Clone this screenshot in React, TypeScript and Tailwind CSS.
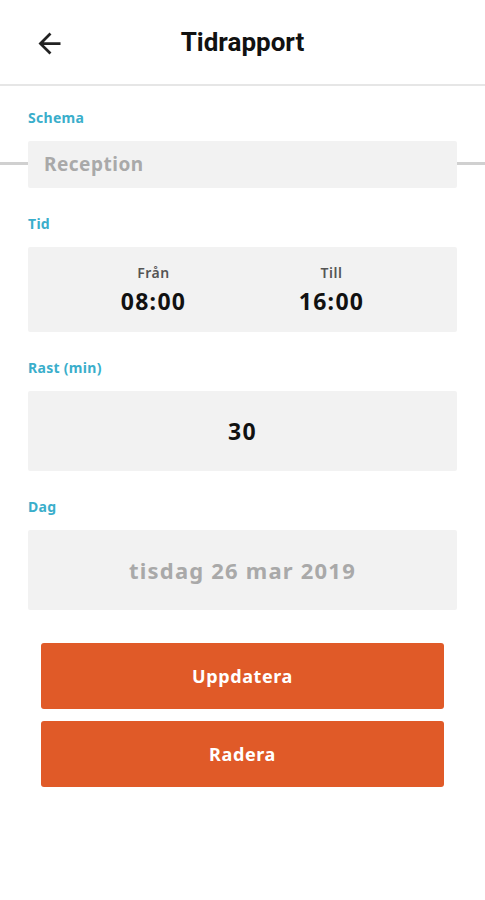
const font = "font-['Noto_Sans','Open_Sans',sans-serif]";

function Label({ children }: { children: React.ReactNode }) {
  return (
    <div className={`${font} h-[14px] text-[14px] font-bold leading-none tracking-[0.3px] text-[#3aaecb]`}>
      {children}
    </div>
  );
}

export default function App() {
  return (
    <div className="min-h-[900px] w-[485px] bg-white">
      <header className="relative flex h-[86px] items-center justify-center border-b-2 border-[#e6e6e6]">
        <button className="absolute left-[33px] top-[27px] text-[#222]">
          <svg width="33" height="33" viewBox="0 0 24 24" fill="currentColor">
            <path d="M20 11H7.83l5.59-5.59L12 4l-8 8 8 8 1.41-1.41L7.83 13H20v-2z" />
          </svg>
        </button>
        <h1 className="font-['Roboto',sans-serif] text-[26px] font-bold text-[#111]">Tidrapport</h1>
      </header>

      <div className="px-[28px] pt-[25px]">
        <Label>Schema</Label>
        <div className="relative -mx-[28px] mt-[16px] px-[28px]">
          <div className="absolute left-0 right-0 top-[21px] h-[3px] bg-[#d0d0d0]" />
          <div className={`relative flex h-[47px] items-center rounded-[2px] bg-[#f2f2f2] px-[16px] ${font} text-[19px] font-bold tracking-[0.5px] text-[#a9a9a9]`}>
            Reception
          </div>
        </div>

        <div className="mt-[29px]">
          <Label>Tid</Label>
        </div>
        <div className={`mt-[16px] flex h-[85px] items-center justify-center rounded-[2px] bg-[#f2f2f2] ${font}`}>
          <div className="flex w-[178px] flex-col items-center">
            <span className="text-[14px] font-semibold leading-none tracking-[0.5px] text-[#555]">Från</span>
            <span className="mt-[10px] text-[23px] font-bold leading-none tracking-[1.3px] text-[#111]">08:00</span>
          </div>
          <div className="flex w-[178px] flex-col items-center">
            <span className="text-[14px] font-semibold leading-none tracking-[0.5px] text-[#555]">Till</span>
            <span className="mt-[10px] text-[23px] font-bold leading-none tracking-[1.3px] text-[#111]">16:00</span>
          </div>
        </div>

        <div className="mt-[29px]">
          <Label>Rast (min)</Label>
        </div>
        <div className={`mt-[16px] flex h-[80px] items-center justify-center rounded-[2px] bg-[#f2f2f2] ${font} text-[23px] font-bold tracking-[1.3px] text-[#111]`}>
          30
        </div>

        <div className="mt-[29px]">
          <Label>Dag</Label>
        </div>
        <div className={`mt-[16px] flex h-[80px] items-center justify-center rounded-[2px] bg-[#f2f2f2] ${font} text-[22px] font-bold tracking-[1.2px] text-[#a9a9a9]`}>
          tisdag 26 mar 2019
        </div>

        <div className="mt-[33px] flex flex-col gap-[12px] px-[13px]">
          <button className={`h-[66px] rounded-[3px] bg-[#e05a28] ${font} text-[18px] font-bold tracking-[0.6px] text-white`}>
            Uppdatera
          </button>
          <button className={`h-[66px] rounded-[3px] bg-[#e05a28] ${font} text-[18px] font-bold tracking-[0.6px] text-white`}>
            Radera
          </button>
        </div>
      </div>
    </div>
  );
}
